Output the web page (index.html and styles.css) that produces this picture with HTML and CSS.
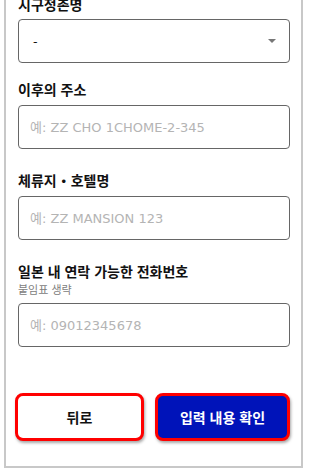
FILE: index.html
```html
<!DOCTYPE html>
<html lang="ko">
<head>
  <meta charset="UTF-8" />
  <meta name="viewport" content="width=device-width, initial-scale=1.0"/>
  <title>주소 입력</title>
  <link rel="stylesheet" href="styles.css">
</head>
<body>
  <div class="form-card">
    <div class="field field-first">
      <label class="field-label">시구정촌명</label>
      <div class="select-box">
        <span class="select-value">-</span>
        <span class="select-arrow"></span>
      </div>
    </div>

    <div class="field field-address">
      <label class="field-label">이후의 주소</label>
      <input class="text-input" type="text" placeholder="예: ZZ CHO 1CHOME-2-345">
    </div>

    <div class="field">
      <label class="field-label">체류지・호텔명</label>
      <input class="text-input" type="text" placeholder="예: ZZ MANSION 123">
    </div>

    <div class="field">
      <label class="field-label">일본 내 연락 가능한 전화번호</label>
      <div class="field-hint">붙임표 생략</div>
      <input class="text-input input-phone" type="text" placeholder="예: 09012345678">
    </div>

    <div class="button-row">
      <button class="btn btn-back">뒤로</button>
      <button class="btn btn-confirm">입력 내용 확인</button>
    </div>
  </div>
</body>
</html>
```

FILE: styles.css
```css
body {
  margin: 0;
  padding: 0;
  background-color: #fff;
  font-family: "Noto Sans CJK KR", "DejaVu Sans", sans-serif;
  color: #111;
  overflow: hidden;
}

.form-card {
  width: 272px;
  margin: -5px 0 0 4px;
  padding: 0 11px 25px 12px;
  border: 2px solid #c8c8c8;
  border-top: none;
}

.field {
  display: flex;
  flex-direction: column;
  margin-top: 22px;
}

.field-first {
  margin-top: 0;
}

.field-first .field-label {
  margin-bottom: 6px;
}

.field-address {
  margin-top: 17px;
}

.field-label {
  font-size: 14px;
  font-weight: bold;
  line-height: 18px;
  margin-bottom: 7px;
}

.field-hint {
  font-size: 11px;
  line-height: 12px;
  color: #808080;
  margin-top: -4px;
  margin-bottom: 8px;
}

.select-box {
  height: 42px;
  border: 1px solid #666;
  border-radius: 4px;
  display: flex;
  align-items: center;
  justify-content: space-between;
  padding: 0 13px 0 14px;
}

.select-value {
  font-size: 13px;
}

.select-arrow {
  width: 0;
  height: 0;
  border-left: 4px solid transparent;
  border-right: 4px solid transparent;
  border-top: 4px solid #777;
}

.text-input {
  box-sizing: border-box;
  height: 44px;
  width: 100%;
  border: 1px solid #666;
  border-radius: 4px;
  padding: 0 11px;
  font-family: "DejaVu Sans", "Noto Sans CJK KR", sans-serif;
  font-size: 13px;
  background: #fff;
}

.text-input::placeholder {
  color: #b4b4b4;
}

.button-row {
  display: flex;
  justify-content: space-between;
  margin-top: 46px;
  margin-left: -3px;
}

.btn {
  height: 48px;
  border: 3px solid #f00;
  border-radius: 8px;
  font-family: "Noto Sans CJK KR", sans-serif;
  font-size: 14px;
  font-weight: bold;
  cursor: pointer;
  box-shadow: 1px 2px 3px rgba(0, 0, 0, 0.35);
}

.btn-back {
  width: 129px;
  background-color: #fff;
  color: #111;
}

.btn-confirm {
  width: 135px;
  background-color: #0013b9;
  color: #fff;
}
```
